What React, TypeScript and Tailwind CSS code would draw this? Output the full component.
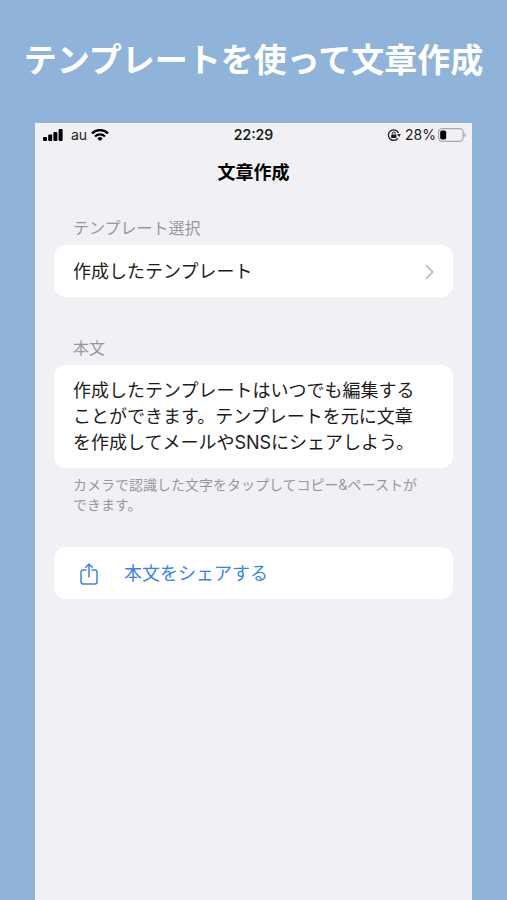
import { useState } from "react";

function StatusBar() {
  return (
    <div className="grid h-6 grid-cols-3 items-center px-2 text-sm font-medium text-[#1c1c1e]">
      <div className="flex items-center gap-2">
        <svg className="h-3 w-5" viewBox="0 0 20 12" fill="#000" aria-hidden="true">
          <rect x="0" y="8" width="4" height="4" rx="1" />
          <rect x="5.2" y="5.6" width="4" height="6.4" rx="1" />
          <rect x="10.4" y="3" width="4" height="9" rx="1" />
          <rect x="15.6" y="0" width="4" height="12" rx="1" />
        </svg>
        <span className="font-normal">au</span>
        <svg className="-ml-1 h-3 w-[18px]" viewBox="0 0 18 12" fill="none" stroke="#000" aria-hidden="true">
          <path d="M1 4.4a11.4 11.4 0 0 1 16 0" strokeWidth="2.4" />
          <path d="M4 7.5a7.1 7.1 0 0 1 10 0" strokeWidth="2.2" />
          <path d="M9 12 6.4 9.4a3.7 3.7 0 0 1 5.2 0Z" fill="#000" stroke="none" />
        </svg>
      </div>
      <time className="text-center font-semibold">22:29</time>
      <div className="-mr-0.5 flex items-center justify-end gap-1">
        <svg className="h-3.5 w-3.5" viewBox="0 0 14 14" fill="none" stroke="#1c1c1e" aria-hidden="true">
          <path d="M11.5 4.9A5.3 5.3 0 1 0 10.900 10.400" strokeWidth="1.3" />
          <path d="m9.900 6.200 3.900-.3-1.500 3.200Z" fill="#1c1c1e" stroke="none" />
          <rect x="4.2" y="6.400" width="5.200" height="3.700" rx="0.6" fill="#1c1c1e" stroke="none" />
          <path d="M5.300 6.400v-.9a1.500 1.500 0 0 1 3 0v.9" strokeWidth="1" />
        </svg>
        <span className="font-normal">28%</span>
        <svg className="-ml-0.5 h-3.5 w-7" viewBox="0 0 28 14" fill="none" aria-hidden="true">
          <rect x="0.6" y="0.6" width="24.6" height="12.8" rx="3.6" stroke="#a9a9ad" strokeWidth="1.2" />
          <rect x="2.2" y="2.4" width="6" height="9.2" rx="1.8" fill="#000" />
          <path d="M26.4 4.8c1 .4 1.4 1.2 1.4 2.2s-.4 1.8-1.4 2.2Z" fill="#a9a9ad" />
        </svg>
      </div>
    </div>
  );
}

export default function App() {
  const [body, setBody] = useState(
    "作成したテンプレートはいつでも編集する\nことができます。テンプレートを元に文章\nを作成してメールやSNSにシェアしよう。"
  );

  return (
    <div className="flex min-h-screen flex-col bg-[#8fb3d9] font-[Inter,'Noto_Sans_CJK_JP',sans-serif]">
      <h1 className="pt-9 pb-[39px] text-center text-[33px] leading-[48px] font-bold whitespace-nowrap text-white">
        テンプレートを使って文章作成
      </h1>

      <main className="mx-[35px] flex grow flex-col bg-[#f1f0f5]">
        <StatusBar />
        <h2 className="text-center text-lg leading-[52px] font-bold text-black">文章作成</h2>

        <div className="flex flex-col px-[19px] pt-[17px]">
          <section>
            <h3 className="px-[19px] pb-[5px] text-base leading-6 text-[#98989c]">テンプレート選択</h3>
            <button
              type="button"
              className="flex h-[52px] w-full items-center justify-between rounded-xl bg-white px-[19px] pt-0.5 text-left text-lg text-[#1c1c1e]"
            >
              作成したテンプレート
              <svg className="h-4 w-[9px]" viewBox="0 0 9 16" fill="none" stroke="#c4c4c7" strokeWidth="2" strokeLinecap="round" strokeLinejoin="round" aria-hidden="true">
                <path d="m1.4 1.6 6.2 6.4-6.2 6.4" />
              </svg>
            </button>
          </section>

          <section className="pt-[39px]">
            <label htmlFor="body" className="block px-[19px] pb-[5px] text-base leading-6 text-[#98989c]">
              本文
            </label>
            <textarea
              id="body"
              rows={3}
              value={body}
              onChange={(e) => setBody(e.target.value)}
              className="block w-full resize-none overflow-hidden rounded-xl bg-white px-[19px] pt-[13px] pb-3 text-lg leading-[26px] text-[#1c1c1e] outline-none"
            />
            <p className="px-[19px] pt-[7px] text-sm leading-5 text-[#98989c]">
              カメラで認識した文字をタップしてコピー&amp;ペーストが
              <br />
              できます。
            </p>
          </section>

          <button
            type="button"
            className="mt-8 flex h-[52px] items-center gap-[26px] rounded-xl bg-white px-[26px] pt-0.5 text-lg text-[#3b82ee]"
          >
            <svg className="h-[22px] w-[18px]" viewBox="0 0 18 22" fill="none" stroke="currentColor" strokeWidth="1.5" strokeLinecap="round" strokeLinejoin="round" aria-hidden="true">
              <path d="M6 7H3.2A2.2 2.2 0 0 0 1 9.2v9.6A2.2 2.2 0 0 0 3.2 21h11.6a2.2 2.2 0 0 0 2.2-2.2V9.2A2.2 2.2 0 0 0 14.8 7H12" />
              <path d="M9 14V1.2M5.8 4.2 9 1l3.2 3.2" />
            </svg>
            本文をシェアする
          </button>
        </div>
      </main>
    </div>
  );
}
